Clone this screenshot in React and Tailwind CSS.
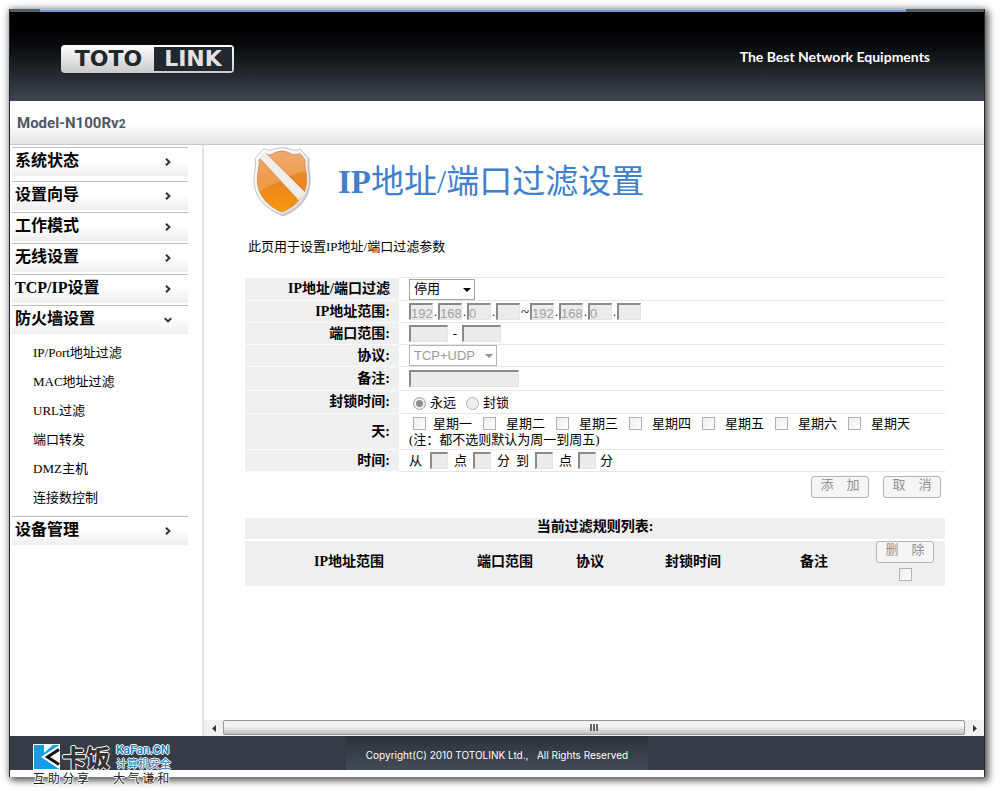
import React from "react";

const menuBefore = [
  { label: "系统状态", gap: "mb-[5px]" },
  { label: "设置向导", gap: "mb-0.5" },
  { label: "工作模式", gap: "mb-0.5" },
  { label: "无线设置", gap: "mb-0.5" },
  { label: "TCP/IP设置", gap: "mb-0.5" },
  { label: "防火墙设置", gap: "", open: true },
];
const subItems = ["IP/Port地址过滤", "MAC地址过滤", "URL过滤", "端口转发", "DMZ主机", "连接数控制"];
const days = ["星期一", "星期二", "星期三", "星期四", "星期五", "星期六", "星期天"];

const sunken =
  "h-[17px] border-t-2 border-l-2 border-b border-r border-t-[#8a8a8a] border-l-[#8a8a8a] border-b-[#e4e4e4] border-r-[#e4e4e4] bg-[#ebebeb] pt-0.5 font-['Liberation_Sans',sans-serif] text-[13px] leading-3 text-[#a0a0a0]";
const box =
  "size-[13px] shrink-0 appearance-none border border-[#b1b1b1] bg-linear-to-br from-[#ededed] to-white";

function Chevron({ down }) {
  return (
    <svg width="8" height="8" viewBox="0 0 8 8" aria-hidden="true">
      <path d={down ? "M0.8 2.2 L4 5.4 L7.2 2.2" : "M2 0.8 L5.4 4 L2 7.2"} fill="none" stroke="#333" strokeWidth="2" />
    </svg>
  );
}

function MenuItem({ label, gap = "", open }) {
  return (
    <a
      href="#"
      className={`flex h-[29px] items-center justify-between border-t border-[#bdbdbd] bg-linear-to-b from-white from-40% to-[#eeeeee] pr-4 pl-[3px] text-base font-bold text-black ${gap}`}
    >
      <span className="pb-0.5 leading-6 whitespace-nowrap">{label}</span>
      <Chevron down={open} />
    </a>
  );
}

function Row({ label, id, height, children }) {
  return (
    <div className={`grid grid-cols-[154px_1fr] ${height}`}>
      <label
        htmlFor={id}
        className="flex items-center justify-end border-b border-[#fafafa] bg-[#efefef] pr-[9px] text-sm leading-4 font-bold"
      >
        {label}
      </label>
      <div className="flex items-center border-b border-[#e6e6e6] pl-2.5">{children}</div>
    </div>
  );
}

function Select({ id, value, width, disabled }) {
  return (
    <span className={`relative flex ${width}`}>
      <select
        id={id}
        disabled={disabled}
        className={`h-[21px] w-full appearance-none border bg-white pl-1 text-[13px] leading-4 ${
          disabled
            ? "border-[#b5b5b5] font-['Liberation_Sans',sans-serif] text-[#9a9a9a]"
            : "border-[#a5a5a5] text-black"
        }`}
      >
        <option>{value}</option>
      </select>
      <svg className="pointer-events-none absolute top-[9px] right-1" width="8" height="4" viewBox="0 0 8 4" aria-hidden="true">
        <path d="M0 0 H8 L4 4 Z" fill={disabled ? "#8f8f8f" : "#000"} />
      </svg>
    </span>
  );
}

function IpFields({ name, firstId }) {
  return ["192", "168", "0", ""].map((v, i) => (
    <React.Fragment key={i}>
      {i > 0 && <span className="w-[5px] text-center text-xs">.</span>}
      <input id={i === 0 ? firstId : undefined} aria-label={`${name} ${i + 1}`} disabled defaultValue={v} className={`${sunken} w-6`} />
    </React.Fragment>
  ));
}

function PushButton({ children }) {
  return (
    <button
      disabled
      className="h-[22px] w-[58px] rounded-[3px] border border-[#b3b3b3] bg-[#f5f5f5] pb-1 text-[13px] leading-4 font-normal whitespace-nowrap text-[#8f8f8f]"
    >
      {children}
    </button>
  );
}

function Shield() {
  return (
    <svg width="60" height="70" viewBox="0 0 60 70" aria-hidden="true">
      <defs>
        <linearGradient id="rim" x1="0" y1="0" x2="1" y2="1">
          <stop offset="0" stopColor="#ffffff" />
          <stop offset="0.6" stopColor="#f1edeb" />
          <stop offset="1" stopColor="#dcd6d3" />
        </linearGradient>
        <linearGradient id="orange" x1="0" y1="0" x2="0" y2="1">
          <stop offset="0" stopColor="#ec9c58" />
          <stop offset="0.5" stopColor="#ea8420" />
          <stop offset="1" stopColor="#ff9c08" />
        </linearGradient>
        <clipPath id="inner">
          <path d="M12 6.500 C16 8.500 20 8 23 5.500 Q30 2.500 37 5.500 C40 8 44 8.500 48 6.500 L53 13 C52 20 55.500 25 54.500 36 C53 50 43 60 30 65 C17 60 7 50 5.500 36 C4.500 25 8 20 7 13 Z" />
        </clipPath>
      </defs>
      <path d="M14 3 C17 5 20 4 23 2.500 Q31 0 39 2.500 C42 4 45 5 49 3 L58 12 C56 20 59.500 26 58.500 37 C57 53 46 64 31.500 69.500 C18 64 5 53 3.500 37 C3 26 6 20 4 12 Z" fill="#8a8a8a" opacity="0.45" />
      <path d="M12 1.500 C15 4 19 3.500 22 2 Q30 -1 38 2 C41 3.500 45 4 48 1.500 L56.500 11.500 C54.500 20 58 26 57.500 36 C56 52 45 63 30 68 C15 63 3.500 52 2 36 C1.500 26 5 20 3 11.500 Z" fill="url(#rim)" stroke="#b9b3b0" strokeWidth="0.8" />
      <g clipPath="url(#inner)">
        <rect width="60" height="70" fill="url(#orange)" />
        <path d="M0 0 H60 V24 C46 24 36 29 28 35 C20 37 10 42 0 50 Z" fill="#fff" opacity="0.18" />
      </g>
      <path d="M12 6.500 C16 8.500 20 8 23 5.500 Q30 2.500 37 5.500 C40 8 44 8.500 48 6.500 L53 13 C52 20 55.500 25 54.500 36 C53 50 43 60 30 65 C17 60 7 50 5.500 36 C4.500 25 8 20 7 13 Z" fill="none" stroke="#c48c5c" strokeWidth="0.8" />
      <path d="M7 10 L13 5 L53.500 45.500 L47 53.500 Z" fill="#f0edeb" />
      <path d="M14 6 L53 45 M8 12 L46 53" fill="none" stroke="#c99160" strokeWidth="0.7" />
    </svg>
  );
}

function Brand() {
  return (
    <div className="flex h-7 w-[173px] items-stretch rounded-sm bg-linear-to-b from-white to-[#c9c9c9] p-0.5 font-['DejaVu_Sans',sans-serif] text-[22px] font-bold">
      <span className="flex flex-1 items-center justify-center leading-6 text-[#22272c]">TOTO</span>
      <span className="flex w-[78px] items-center justify-center bg-[#22282f] leading-6 text-[#e2e2e2]">LINK</span>
    </div>
  );
}

function Watermark() {
  const outline = "[text-shadow:1px_0_#fff,-1px_0_#fff,0_1px_#fff,0_-1px_#fff]";
  return (
    <div className="absolute top-2 left-[23px] font-['Noto_Sans_CJK_SC',sans-serif] whitespace-nowrap">
      <div className="flex h-[26px] items-center">
        <svg width="27" height="26" viewBox="0 0 27 26" aria-hidden="true">
          <rect width="27" height="26" fill="#fff" />
          <path d="M1 1 H11 V9 L20 1 H26 V2 L11 13 L26 24 V25 H1 Z" fill="#139be8" />
          <path d="M27 4 L13.500 13 L27 22" fill="none" stroke="#fff" strokeWidth="6" />
          <path d="M26 5.500 L14.500 13 L26 20.500" fill="none" stroke="#111" strokeWidth="3" />
        </svg>
        <span className={`ml-0.5 text-2xl leading-[26px] font-black text-[#333] ${outline}`}>卡饭</span>
        <span className={`ml-1.5 flex flex-col text-[#1b83bd] ${outline}`}>
          <span className="font-[Roboto,sans-serif] text-xs leading-[13px] font-medium">KaFan.CN</span>
          <span className="text-[11px] leading-[13px]">计算机安全</span>
        </span>
      </div>
      <div className={`flex gap-6 text-[12px] leading-4 text-[#222] ${outline}`}>
        <span>互 助 分 享</span>
        <span>大 气 谦 和</span>
      </div>
    </div>
  );
}

export default function App() {
  return (
    <div className="flex min-h-screen flex-col bg-white pt-[9px] pr-[15px] pb-3.5 pl-[9px] font-['Liberation_Serif','Noto_Sans_CJK_SC',serif] text-[13px] text-black">
      <div className="flex flex-1 flex-col border-x border-[#22282f] bg-white shadow-[3px_3px_7px_1px_rgba(0,0,0,0.55),0_0_7px_1px_rgba(0,0,0,0.25)]">
        <div className="flex h-[3px] flex-col bg-[#555d66]">
          <div className="mr-[78px] ml-[30px] h-full border-t border-[#a9bdd6] bg-[#6f9bd2]" />
        </div>
        <header className="flex h-[89px] items-center justify-between bg-linear-to-b from-black to-[#3f4851] pt-1 pr-[54px] pl-[51px]">
          <Brand />
          <p className="pb-1 font-[Lato,sans-serif] text-sm font-bold text-white">The Best Network Equipments</p>
        </header>
        <div className="flex h-11 items-center border-b border-[#c8c8c8] bg-linear-to-b from-white from-50% to-[#e4e4e4] pt-0.5 pl-[7px] font-[Roboto,sans-serif] text-[15px] font-bold text-[#4c5863]">
          <h2>
            Model-N100Rv<span className="text-xs">2</span>
          </h2>
        </div>

        <div className="flex flex-1">
          <nav className="w-[194px] shrink-0 border-r-2 border-[#e3e3e3] pt-0.5 pr-3.5 pl-0.5">
            {menuBefore.map((m) => (
              <MenuItem key={m.label} {...m} />
            ))}
            <ul className="mt-1 mb-1 pl-[21px]">
              {subItems.map((s) => (
                <li key={s} className="flex h-[29px] items-center">
                  <a href="#">{s}</a>
                </li>
              ))}
            </ul>
            <MenuItem label="设备管理" />
          </nav>

          <div className="flex min-w-0 flex-1 flex-col">
            <main className="flex-1 pr-[39px] pl-[41px]">
              <div className="flex items-center pt-0.5 pl-[7px]">
                <Shield />
                <h1 className="ml-[26px] text-[33px] leading-10 text-[#3f80cd]">
                  <b>IP</b>地址/端口过滤设置
                </h1>
              </div>
              <p className="mt-5 pl-[3px] leading-5">此页用于设置IP地址/端口过滤参数</p>

              <form className="mt-5" onSubmit={(e) => e.preventDefault()}>
                <div className="ml-[154px] border-t border-[#e6e6e6]" />
                <Row label="IP地址/端口过滤" id="mode" height="min-h-[23px]">
                  <Select id="mode" value="停用" width="w-[66px]" />
                </Row>
                <Row label="IP地址范围:" id="ip-a" height="min-h-[22px]">
                  <IpFields name="起始IP" firstId="ip-a" />
                  <span className="w-2.5 text-center text-[15px] leading-4">~</span>
                  <IpFields name="结束IP" />
                </Row>
                <Row label="端口范围:" id="port-a" height="min-h-[22px]">
                  <input id="port-a" disabled className={`${sunken} w-[39px]`} />
                  <span className="w-3.5 text-center">-</span>
                  <input aria-label="结束端口" disabled className={`${sunken} w-[39px]`} />
                </Row>
                <Row label="协议:" id="protocol" height="min-h-[22px]">
                  <Select id="protocol" value="TCP+UDP" width="w-[88px]" disabled />
                </Row>
                <Row label="备注:" id="remark" height="min-h-[24px]">
                  <input id="remark" disabled className={`${sunken} w-[110px]`} />
                </Row>
                <Row label="封锁时间:" id="always" height="min-h-[23px]">
                  {["永远", "封锁"].map((t, i) => (
                    <label key={t} className="mr-2.5 flex items-center gap-1 pt-0.5 pl-1 first:mr-1.5">
                      <input
                        id={i === 0 ? "always" : "block"}
                        type="radio"
                        name="block-time"
                        disabled
                        defaultChecked={i === 0}
                        className="size-[13px] appearance-none rounded-full border border-[#b1b1b1] bg-[#ededed] checked:bg-[#8e8e8e] checked:shadow-[inset_0_0_0_2px_#f2f2f2]"
                      />
                      {t}
                    </label>
                  ))}
                </Row>
                <Row label="天:" id="day-0" height="min-h-[36px]">
                  <div className="flex flex-col">
                    <div className="flex gap-[11px] pl-1">
                      {days.map((d, i) => (
                        <label key={d} className="flex items-center gap-2.5 leading-4 whitespace-nowrap first:gap-[7px]">
                          <input id={`day-${i}`} type="checkbox" disabled className={box} />
                          {d}
                        </label>
                      ))}
                    </div>
                    <p className="leading-4">(注：都不选则默认为周一到周五)</p>
                  </div>
                </Row>
                <Row label="时间:" id="from-h" height="min-h-[22px]">
                  <span>从</span>
                  <input id="from-h" disabled className={`${sunken} mr-1.5 ml-2 w-[18px]`} />
                  <span>点</span>
                  <input aria-label="开始分" disabled className={`${sunken} mr-1.5 ml-1.5 w-[18px]`} />
                  <span>分</span>
                  <span className="ml-1.5">到</span>
                  <input aria-label="结束时" disabled className={`${sunken} mr-1.5 ml-1.5 w-[18px]`} />
                  <span>点</span>
                  <input aria-label="结束分" disabled className={`${sunken} mr-1 ml-1.5 w-[18px]`} />
                  <span>分</span>
                </Row>
                <div className="mt-1 flex justify-end gap-3.5 pr-1">
                  <PushButton>添　加</PushButton>
                  <PushButton>取　消</PushButton>
                </div>
              </form>

              <table className="mt-5 w-full table-fixed border-collapse text-sm font-bold">
                <colgroup>
                  <col className="w-[208px]" />
                  <col className="w-[104px]" />
                  <col className="w-[66px]" />
                  <col className="w-[140px]" />
                  <col className="w-[102px]" />
                  <col className="w-[80px]" />
                </colgroup>
                <thead className="bg-[#efefef]">
                  <tr className="h-[22px] border-b-2 border-white">
                    <th colSpan={6} className="pb-1 leading-4">当前过滤规则列表:</th>
                  </tr>
                  <tr className="h-[46px]">
                    <th className="pb-1">IP地址范围</th>
                    <th className="pb-1">端口范围</th>
                    <th className="pb-1">协议</th>
                    <th className="pb-1">封锁时间</th>
                    <th className="pb-1">备注</th>
                    <th className="align-top">
                      <div className="flex flex-col items-center gap-[5px]">
                        <PushButton>删　除</PushButton>
                        <input type="checkbox" aria-label="全选" disabled className={box} />
                      </div>
                    </th>
                  </tr>
                </thead>
              </table>
            </main>

            <div className="flex h-4 items-stretch bg-[#f0f0f0]">
              <button aria-label="向左滚动" className="flex w-[19px] items-center justify-center">
                <svg width="4" height="7" viewBox="0 0 4 7" aria-hidden="true">
                  <path d="M4 0 V7 L0 3.500 Z" fill="#333" />
                </svg>
              </button>
              <div className="mb-px flex flex-1 items-center justify-center gap-px rounded-xs border border-[#979797] bg-linear-to-b from-[#f4f4f4] from-40% to-[#bfc0c4]">
                <span className="h-[7px] w-0.5 bg-[#666]" />
                <span className="h-[7px] w-0.5 bg-[#666]" />
                <span className="h-[7px] w-0.5 bg-[#666]" />
              </div>
              <button aria-label="向右滚动" className="flex w-[19px] items-center justify-center">
                <svg width="4" height="7" viewBox="0 0 4 7" aria-hidden="true">
                  <path d="M0 0 V7 L4 3.500 Z" fill="#333" />
                </svg>
              </button>
            </div>
          </div>
        </div>

        <footer className="relative mb-[7px] flex h-[34px] justify-center bg-[#353c45]">
          <p className="flex w-[302px] items-center justify-center bg-linear-to-b from-[#2b323a] to-[#434c55] pt-1 font-[Inter,sans-serif] text-[10px] whitespace-pre text-white">
            {"Copyright(C) 2010 TOTOLINK Ltd.,   All Rights Reserved"}
          </p>
          <Watermark />
        </footer>
      </div>
    </div>
  );
}
